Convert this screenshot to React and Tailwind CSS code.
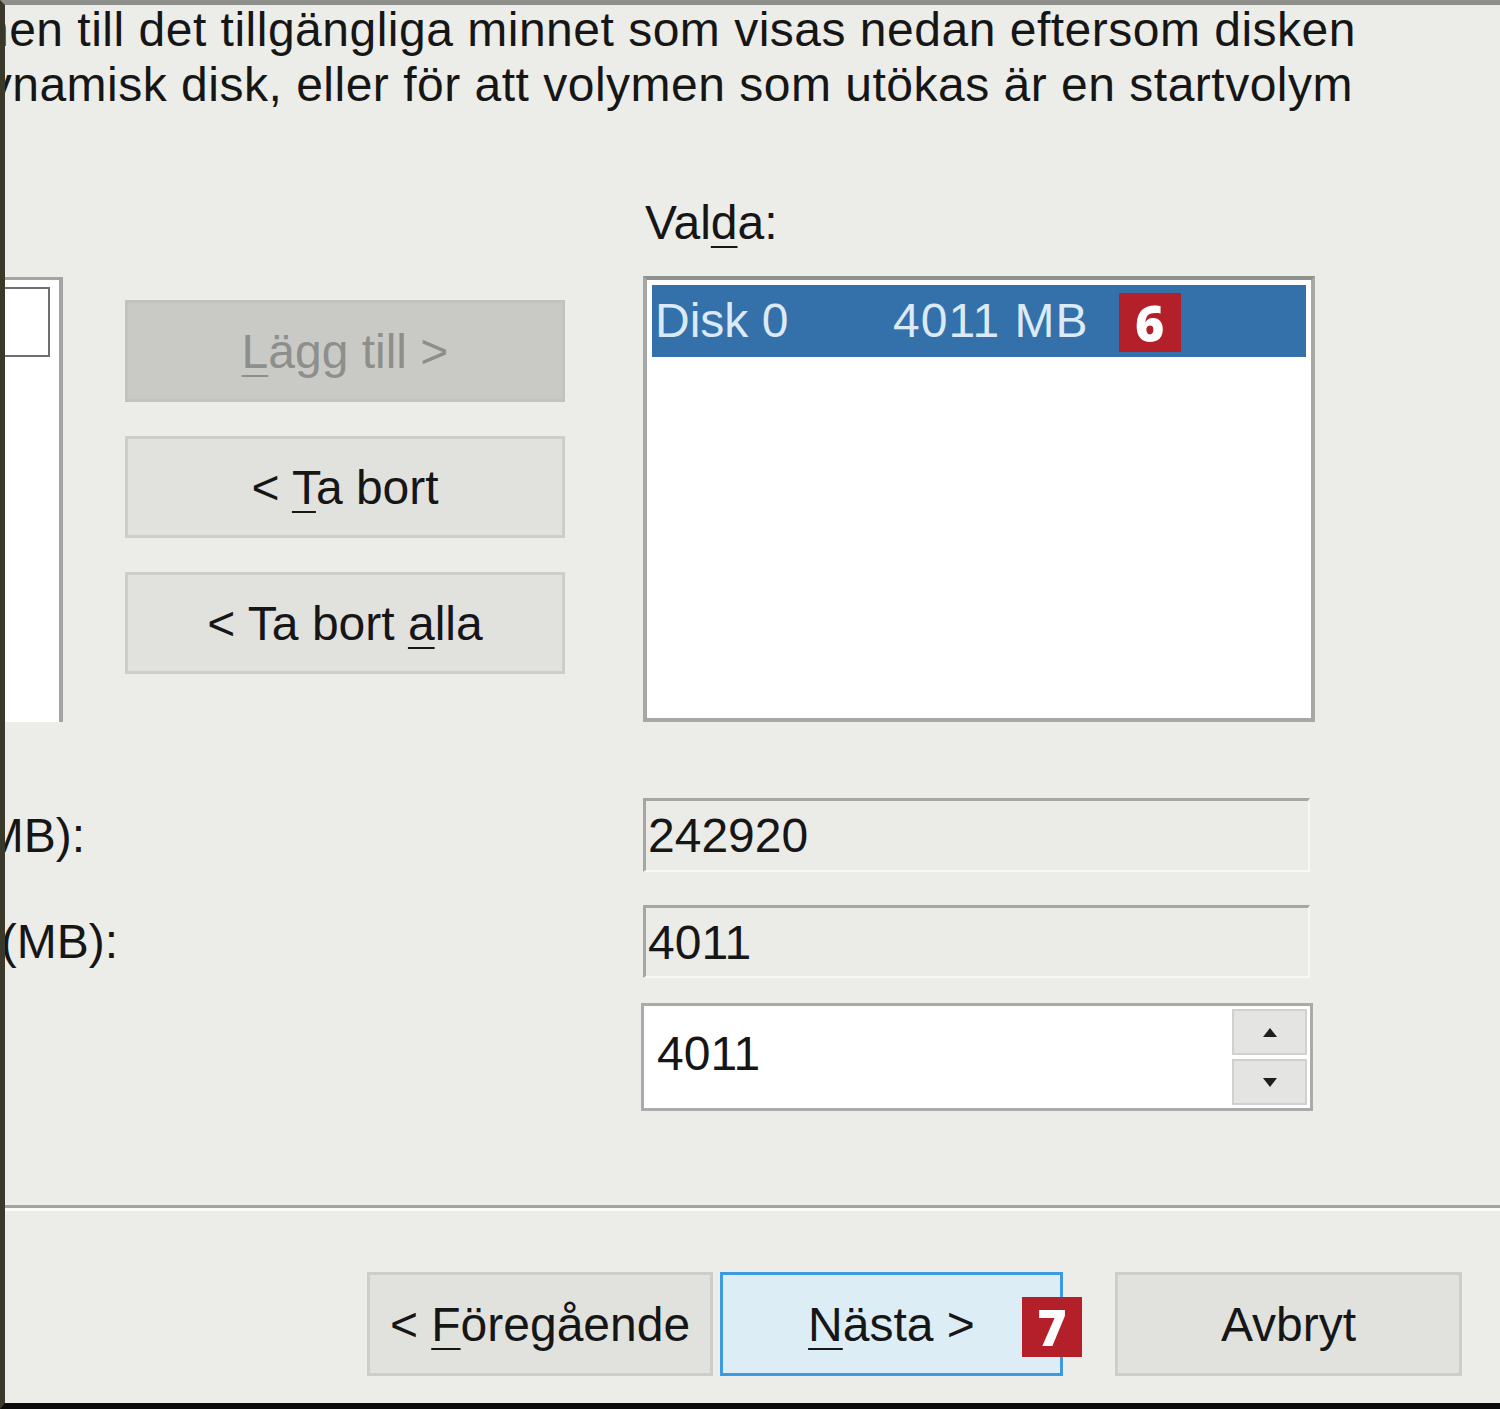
function Mn({ children }) {
  return <span className="underline decoration-[2px] underline-offset-[7px]">{children}</span>;
}

function Badge({ children, className = '' }) {
  return (
    <div className={`flex items-center justify-center bg-[#b3202a] text-white font-['Open_Sans',sans-serif] font-extrabold text-[50px] leading-none ${className}`}>
      {children}
    </div>
  );
}

function ClipText({ width, children, className = '' }) {
  return (
    <div className={`flex justify-end overflow-hidden ${className}`} style={{ width }}>
      <span className="whitespace-nowrap">{children}</span>
    </div>
  );
}

function DlgButton({ children, className = '' }) {
  return (
    <div className={`flex items-center justify-center border-[3px] leading-[55px] ${className}`}>
      <span className="whitespace-pre">{children}</span>
    </div>
  );
}

export default function App() {
  return (
    <div className="w-[1500px] h-[1409px] overflow-hidden bg-[#ecece8] border-t-[5px] border-t-[#8e8e8a] border-l-[5px] border-l-[#3a3828] border-b-[6px] border-b-[#0a0a0a] font-['Liberation_Sans',Arial,sans-serif] text-[48px] text-[#161616] flex flex-col">
      {/* intro text, left part cut off */}
      <div className="-mt-[3px] leading-[55px] tracking-[0.5px]">
        <ClipText width={1351} className="h-[55px]">
          Det går inte att utöka volymen till det tillgängliga minnet som visas nedan eftersom disken
        </ClipText>
        <ClipText width={1348} className="h-[55px]">
          inte kan konverteras till en dynamisk disk, eller för att volymen som utökas är en startvolym
        </ClipText>
      </div>

      {/* lists + move buttons */}
      <div className="flex items-start mt-[83px]">
        <div className="mt-[82px] w-[58px] h-[445px] bg-white border-t-[3px] border-r-[4px] border-[#a3a5a2] pt-[7px]">
          <div className="w-[45px] h-[70px] border-[2px] border-l-0 border-[#6f6f6d]" />
        </div>

        <div className="ml-[62px] mt-[105px] w-[440px] flex flex-col gap-[34px]">
          <DlgButton className="h-[102px] bg-[#c9cac6] border-[#c2c3bf] text-[#8e8f8c]">
            <Mn>L</Mn>ägg till &gt;
          </DlgButton>
          <DlgButton className="h-[102px] bg-[#e1e1de] border-[#cdcdca]">
            &lt; <Mn>T</Mn>a bort
          </DlgButton>
          <DlgButton className="h-[102px] bg-[#e1e1de] border-[#cdcdca]">
            &lt; Ta bort <Mn>a</Mn>lla
          </DlgButton>
        </div>

        <div className="ml-[78px] w-[672px]">
          <div className="h-[56px] leading-[56px] pl-[2px]">
            Val<Mn>d</Mn>a:
          </div>
          <div className="mt-[25px] h-[446px] bg-white border-[4px] border-[#a6a8a5] border-t-[#8f918e] p-[5px]">
            <div className="h-[72px] bg-[#3470aa] flex items-start text-[#dce9f6] leading-[72px]">
              <span className="w-[241px] pl-[3px]">Disk 0</span>
              <span className="tracking-[1px]">4011 MB</span>
              <Badge className="ml-[30px] mt-[8px] w-[62px] h-[59px]">6</Badge>
            </div>
          </div>
        </div>
      </div>

      {/* size fields */}
      <div className="mt-[76px] flex flex-col">
        <div className="flex items-center">
          <div className="w-[638px] leading-[55px]">
            <ClipText width={80}>Total volymstorlek (MB):</ClipText>
          </div>
          <div className="w-[667px] h-[74px] bg-[#ebebe8] border-t-[3px] border-l-[3px] border-b-[2px] border-r-[2px] border-t-[#a6a7a4] border-l-[#a6a7a4] border-b-[#f7f7f5] border-r-[#f7f7f5] flex items-center pl-[2px] leading-[55px]">
            242920
          </div>
        </div>
        <div className="mt-[33px] flex items-center">
          <div className="w-[638px] leading-[55px]">
            <ClipText width={113}>Maximalt tillgängligt utrymme (MB):</ClipText>
          </div>
          <div className="w-[667px] h-[73px] bg-[#ebebe8] border-t-[3px] border-l-[3px] border-b-[2px] border-r-[2px] border-t-[#a6a7a4] border-l-[#a6a7a4] border-b-[#f7f7f5] border-r-[#f7f7f5] flex items-center pl-[2px] leading-[55px]">
            4011
          </div>
        </div>
        <div className="mt-[25px] flex">
          <div className="w-[636px]" />
          <div className="w-[672px] h-[108px] bg-white border-[3px] border-[#a9aba8] flex">
            <div className="flex-1 pl-[13px] pt-[20px] leading-[55px]">4011</div>
            <div className="w-[78px] flex flex-col gap-[4px] py-[3px] pr-[3px]">
              <div className="flex-1 bg-[#e4e4e2] border-[2px] border-[#d0d1ce] flex items-center justify-center">
                <svg width="14" height="9" viewBox="0 0 14 9"><path d="M7 0 L14 9 L0 9 Z" fill="#1e1e1e" /></svg>
              </div>
              <div className="flex-1 bg-[#e4e4e2] border-[2px] border-[#d0d1ce] flex items-center justify-center">
                <svg width="14" height="9" viewBox="0 0 14 9"><path d="M0 0 L14 0 L7 9 Z" fill="#1e1e1e" /></svg>
              </div>
            </div>
          </div>
        </div>
      </div>

      {/* separator */}
      <div className="mt-[94px] h-[6px] border-t-[3px] border-t-[#a2a4a1] border-b-[3px] border-b-[#fafaf8]" />

      {/* wizard buttons */}
      <div className="mt-[61px] pl-[362px] flex">
        <DlgButton className="w-[346px] h-[104px] bg-[#e1e1de] border-[#cdcdca]">
          &lt; <Mn>F</Mn>öregående
        </DlgButton>
        <div className="relative ml-[7px]">
          <DlgButton className="w-[343px] h-[104px] bg-[#dcedf6] border-[#3d9ae0]">
            <Mn>N</Mn>ästa &gt;
          </DlgButton>
          <Badge className="absolute left-[302px] top-[25px] w-[60px] h-[60px]">7</Badge>
        </div>
        <DlgButton className="ml-[52px] w-[347px] h-[104px] bg-[#e1e1de] border-[#cdcdca]">
          Avbryt
        </DlgButton>
      </div>
    </div>
  );
}
